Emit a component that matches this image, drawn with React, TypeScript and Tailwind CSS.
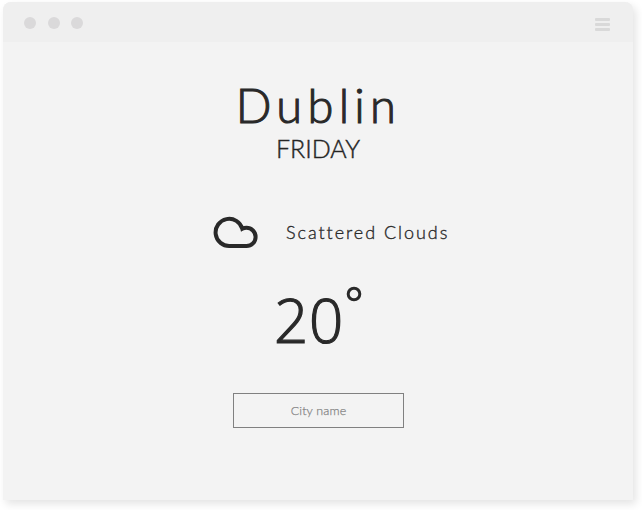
export default function App() {
  return (
    <div className="h-[510px] w-[642px] overflow-hidden bg-white pt-[2px] pl-[3px] font-['Lato',sans-serif] text-[#292929]">
      <main className="flex h-[498px] w-[630px] flex-col rounded-t-[8px] bg-[#f3f3f3] shadow-[3px_4px_8px_rgba(0,0,0,0.11)]">
        <header className="flex h-10 shrink-0 items-center justify-between rounded-t-[8px] bg-[#efefef] pr-[23px] pl-[21px]">
          <div className="flex gap-[11.5px] pt-[2px]">
            <i className="size-[12px] rounded-full bg-[#dad9da]" />
            <i className="size-[12px] rounded-full bg-[#dad9da]" />
            <i className="size-[12px] rounded-full bg-[#dad9da]" />
          </div>
          <div className="flex w-[15px] flex-col gap-[2px] pt-[4px]">
            <i className="h-[3px] rounded-[1px] bg-[#d9d9d9]" />
            <i className="h-[3px] rounded-[1px] bg-[#d9d9d9]" />
            <i className="h-[3px] rounded-[1px] bg-[#d9d9d9]" />
          </div>
        </header>
        <section className="flex flex-col items-center pt-[39px]">
          <h1 className="h-[52px] pl-[1px] text-[47px] leading-[48px] font-light tracking-[5.3px] [-webkit-text-stroke:1.1px_#292929]">Dublin</h1>
          <p className="h-8 text-[25px] leading-[30px] font-light [-webkit-text-stroke:0.4px_#202020]">FRIDAY</p>
        </section>
        <section className="mt-[50px] flex h-[34px] items-center pl-[210px]">
          <svg width="46" height="34" viewBox="0 0 46 34" fill="none" stroke="#292929" strokeWidth="4">
            <path d="M17 31H33.5A9.1 9.1 0 0 0 33.5 12.8Q31.4 12.8 29.3 13.8A13.6 13.6 0 1 0 17 31Z" />
          </svg>
          <span className="ml-[27px] text-[18px] leading-[24px] font-light tracking-[1.95px] [-webkit-text-stroke:0.35px_#292929]">Scattered Clouds</span>
        </section>
        <section className="mt-[36px] flex h-[80px] pl-[271px]">
          <span className="font-['Open_Sans',sans-serif] text-[60px] leading-[71px] font-light tracking-[0.8px] [-webkit-text-stroke:1.2px_#292929]">20</span>
          <svg className="mt-0 ml-px" width="18" height="18" viewBox="0 0 18 18" fill="none" stroke="#292929" strokeWidth="3"><circle cx="9" cy="9" r="5.8" /></svg>
        </section>
        <input aria-label="City name" placeholder="City name" className="mt-[28px] ml-[230px] h-[35px] w-[171px] border border-[#808080] bg-transparent text-center text-[12.5px] font-light tracking-[0.15px] placeholder:text-[#858585] [-webkit-text-stroke:0.25px_#858585]" />
      </main>
    </div>
  );
}
